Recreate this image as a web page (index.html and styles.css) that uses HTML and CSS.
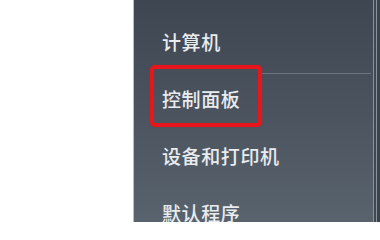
FILE: index.html
```html
<!DOCTYPE html>
<html lang="zh-CN">
<head>
<meta charset="utf-8">
<link rel="stylesheet" href="styles.css">
</head>
<body>
<div class="screen">
  <div class="blank"></div>
  <div class="panel">
    <ul class="menu">
      <li class="item">计算机</li>
      <li class="item item-sep highlighted">控制面板</li>
      <li class="item">设备和打印机</li>
      <li class="item">默认程序</li>
    </ul>
    <div class="edge"></div>
  </div>
</div>
</body>
</html>
```

FILE: styles.css
```css
html, body {
  margin: 0;
  padding: 0;
  background: #ffffff;
}
.screen {
  display: flex;
  width: 380px;
  height: 222px;
  overflow: hidden;
}
.blank {
  width: 133px;
  flex: none;
  background: #ffffff;
}
.panel {
  flex: 1;
  display: flex;
  border-left: 1px solid #b9bec3;
  background: linear-gradient(180deg, #3e4651 0%, #4a535e 50%, #59636e 100%);
}
.menu {
  list-style: none;
  margin: 0;
  padding: 13px 0 0 0;
  flex: 1;
}
.item {
  position: relative;
  height: 57px;
  display: flex;
  align-items: center;
  padding-left: 28px;
  font-family: "Noto Sans CJK SC", "Noto Sans", sans-serif;
  font-size: 19px;
  font-weight: 500;
  color: #e9ecef;
  letter-spacing: 0.6px;
}
.item-sep::before {
  content: "";
  position: absolute;
  top: 3px;
  left: 128px;
  right: 2px;
  height: 1px;
  background: #6b7580;
}
.highlighted::after {
  content: "";
  position: absolute;
  left: 16px;
  top: -5px;
  width: 104px;
  height: 54px;
  border: 4px solid #e8161c;
  border-radius: 5px;
  box-shadow: 0 0 1px rgba(232, 22, 28, 0.6);
}
.edge {
  width: 6px;
  flex: none;
  border-left: 1px solid #8a939c;
  box-shadow: inset 2px 0 0 #3f4751, inset 3px 0 0 #8a939c;
  background: #3a424b;
}
```
